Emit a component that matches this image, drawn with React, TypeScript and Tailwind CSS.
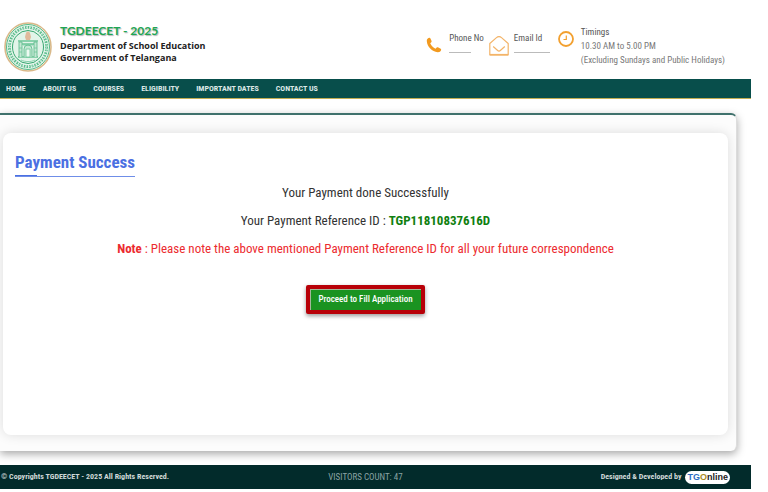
const navLinks = ["Home", "About Us", "Courses", "Eligibility", "Important Dates", "Contact Us"];

function Emblem() {
  return (
    <svg viewBox="0 0 48 50" className="h-[50px] w-12 shrink-0" role="img" aria-label="Government of Telangana emblem">
      <ellipse cx="24" cy="25" rx="23" ry="24" fill="#fff" stroke="#d9b98a" strokeWidth="1.6" />
      <ellipse cx="24" cy="25" rx="21.5" ry="22.5" fill="#e5f5ec" stroke="#43b27b" strokeWidth="0.9" />
      {/* lettering band around the rim */}
      <ellipse cx="24" cy="25" rx="18.6" ry="19.6" fill="none" stroke="#5dbd8d" strokeWidth="2.8" strokeDasharray="1.7 1" />
      <ellipse cx="24" cy="25" rx="18.6" ry="19.6" fill="none" stroke="#e5f5ec" strokeWidth="0.7" strokeDasharray="1.2 2.3" />
      <ellipse cx="24" cy="25" rx="15.5" ry="16.5" fill="#e2f4e9" stroke="#38a871" strokeWidth="1" />
      <path d="M22 11c1-2 3-2 4 0l1 4-1 3h-4l-1-3z" fill="#e0b99b" />
      <path d="M14 19h20M15 22h18M14 35h20" stroke="#6cc598" strokeWidth="1.4" />
      <path d="M15 35V20h3v15M30 35V20h3v15M20 35v-8a4 4 0 0 1 8 0v8" fill="#c3e8d3" stroke="#62bd90" strokeWidth="0.9" />
      <path d="M19 23h10M22 27h4v8h-4zM15 26h3M30 26h3M15 30h3M30 30h3M17 38c4 2 10 2 14 0" fill="#eefaf2" stroke="#6cc79b" strokeWidth="0.8" />
    </svg>
  );
}

function PhoneIcon() {
  return (
    <svg viewBox="0 0 16 16" className="mt-[6px] size-4 shrink-0" fill="#f29a1f" aria-hidden="true">
      <path d="M3.1.8C1.6 1.3.7 2.3.8 4c.4 5.8 5.2 10.7 10.9 11.2 1.8.1 2.9-.7 3.4-2.2.2-.5 0-.9-.4-1.2l-2.8-1.5c-.4-.2-.9-.1-1.2.2l-1.2 1.3C7.3 10.7 5.2 8.6 4.2 6.3l1.1-1.1c.3-.3.4-.7.3-1.1L4.3 1.3C4.1.8 3.6.6 3.1.8z" />
    </svg>
  );
}

function MailIcon() {
  return (
    <svg viewBox="0 0 20 20" className="mt-[5px] size-5 shrink-0" fill="none" stroke="#f3b469" strokeWidth="1.2" strokeLinejoin="round" aria-hidden="true">
      <path d="M.8 7.5L7.5 1.6C9 .4 11 .4 12.5 1.6l6.7 5.9v11.3H.8z" />
      <path d="M4.2 10.5l4.2 3.8c1 .9 2.2.9 3.2 0l4.2-3.8" />
      <path d="M.8 18.7h18.4" strokeWidth="1.6" />
    </svg>
  );
}

function ClockIcon() {
  return (
    <svg viewBox="0 0 16 16" className="size-4 shrink-0" fill="none" stroke="#f2a02f" aria-hidden="true">
      <circle cx="8" cy="8" r="7" strokeWidth="1.8" />
      <path d="M8.3 4.5v4H5.5" strokeWidth="1.2" />
    </svg>
  );
}

function Header() {
  return (
    <header className="flex items-start justify-between pr-[26px] pl-1 pt-[22px] pb-[7px]">
      <div className="flex gap-2">
        <Emblem />
        <div className="font-['Open_Sans',sans-serif] text-[9px] leading-3 font-bold text-[#222]">
          <h1 className="font-['Lato',sans-serif] text-[12px] leading-[18px] text-[#1fa653] [text-shadow:1px_1px_1px_#b5b5b5]">
            TGDEECET - 2025
          </h1>
          <p>Department of School Education</p>
          <p>Government of Telangana</p>
        </div>
      </div>

      <div className="flex pt-[3px] text-[9px] leading-[14px] text-[#555]">
        <div className="flex gap-[7px] pt-[6px]">
          <PhoneIcon />
          <div>
            <p>Phone No</p>
            <div className="w-[22px] border-b border-[#bbb] pt-[7px]" />
          </div>
        </div>
        <div className="ml-[5px] flex gap-[5px] pt-[6px]">
          <MailIcon />
          <div>
            <p>Email Id</p>
            <div className="w-9 border-b border-[#bbb] pt-[7px]" />
          </div>
        </div>
        <div className="ml-2 flex gap-[7px]">
          <div className="pt-[6px]">
            <ClockIcon />
          </div>
          <div className="text-[#777]">
            <p className="text-[#555]">Timings</p>
            <p>10.30 AM to 5.00 PM</p>
            <p>(Excluding Sundays and Public Holidays)</p>
          </div>
        </div>
      </div>
    </header>
  );
}

function PaymentResult() {
  return (
    <main className="mt-[14px] mr-[14px] rounded-r-md border-t-2 border-r border-[#3f716c] border-r-[#ddd] bg-[#fcfcfc] pt-[18px] pr-2 pb-4 pl-[3px] shadow-[0_3px_8px_rgba(0,0,0,0.35)]">
      <section className="rounded-lg bg-white px-3 pt-[17px] pb-[121px] shadow-[0_0_12px_rgba(0,0,0,0.13)]">
        <div className="w-fit">
          <h2 className="text-[17px] leading-6 font-bold text-[#4b70e2]">Payment Success</h2>
          <div className="mt-px border-b border-[#6f8ee8]">
            <div className="h-px w-[22px] bg-[#4b70e2]" />
          </div>
        </div>

        <div className="mt-[6px] flex flex-col items-center gap-2 text-center text-[13px] leading-5 text-[#333]">
          <p>Your Payment done Successfully</p>
          <p>
            Your Payment Reference ID : <b className="text-[#108010]">TGP11810837616D</b>
          </p>
          <p className="text-[#ec2b2f]">
            <b>Note</b> : Please note the above mentioned Payment Reference ID for all your future correspondence
          </p>
        </div>

        <div className="mt-[26px] flex justify-center">
          <button
            type="button"
            className="rounded-xs border-4 border-[#b80008] bg-[#1a9321] px-2 py-1 text-[9px] leading-[13px] font-medium text-white shadow-[0_2px_4px_rgba(0,0,0,0.4),inset_1px_1px_0_#a3b79a]"
          >
            Proceed to Fill Application
          </button>
        </div>
      </section>
    </main>
  );
}

export default function App() {
  return (
    <div className="bg-white pr-[17px] font-['Roboto_Condensed','Liberation_Sans_Narrow',Roboto,sans-serif]">
      <Header />
      <nav className="flex gap-[17px] border-b border-[#c2ad52] bg-[#084e4b] px-[6px] text-[8px] leading-[19px] font-bold text-[#dce8e7] uppercase">
        {navLinks.map((label) => (
          <a key={label} href="#">
            {label}
          </a>
        ))}
      </nav>
      <PaymentResult />
      <footer className="mt-[14px] grid grid-cols-[1fr_auto_1fr] items-center bg-[#022b2b] pr-[21px] pl-px text-[8px] leading-6 font-bold text-[#cfd8d8]">
        <p>© Copyrights TGDEECET - 2025 All Rights Reserved.</p>
        <p className="text-[9px] font-normal text-[#8aa3a3]">VISITORS COUNT: 47</p>
        <p className="flex items-center justify-end gap-1">
          Designed &amp; Developed by
          <a href="#" className="rounded-full bg-white px-[2px] font-['Liberation_Sans',sans-serif] text-[9px] leading-[13px] font-bold text-[#222]">
            <span className="text-[#2c6cc4]">TG</span>
            <span className="text-[#a98c1f]">O</span>nline
          </a>
        </p>
      </footer>
    </div>
  );
}
